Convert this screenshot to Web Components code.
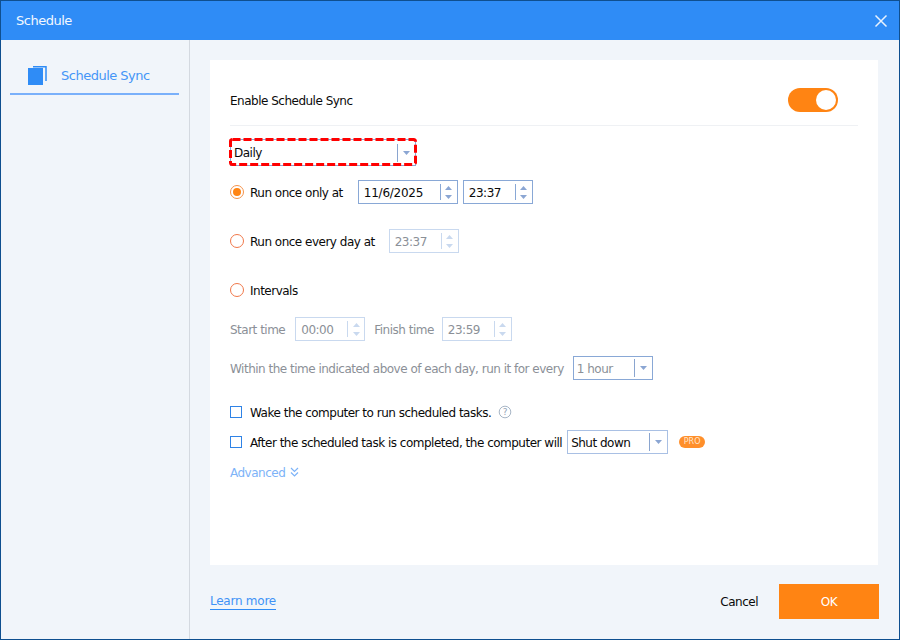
<!DOCTYPE html>
<html lang="en">
<head>
<meta charset="utf-8">
<title>Schedule</title>
<style>
html,body{margin:0;padding:0;background:#f1f5fa}
body{font:12px "DejaVu Sans","Liberation Sans",sans-serif;color:#0a0a0a;letter-spacing:-.5px}
sched-row>span{padding-top:2px}
</style>
</head>
<body>
<sched-window>
  <sched-tab slot="side">Schedule Sync</sched-tab>

  <sched-row h="65" pad="15" between>
    <span>Enable Schedule Sync</span>
    <sched-toggle></sched-toggle>
  </sched-row>
  <sched-hr></sched-hr>
  <sched-row h="27" top="13">
    <sched-select w="186" h="27" focus>Daily</sched-select>
  </sched-row>
  <sched-row h="24" top="14">
    <sched-radio checked>Run once only at</sched-radio>
    <sched-spin w="100" left="15" style="letter-spacing:-.25px">11/6/2025</sched-spin>
    <sched-spin w="70" left="5">23:37</sched-spin>
  </sched-row>
  <sched-row h="24" top="25">
    <sched-radio>Run once every day at</sched-radio>
    <sched-spin w="70" left="14" disabled>23:37</sched-spin>
  </sched-row>
  <sched-row h="24" top="25">
    <sched-radio>Intervals</sched-radio>
  </sched-row>
  <sched-row h="24" top="15" muted>
    <span>Start time</span>
    <sched-spin w="70" left="10" disabled>00:00</sched-spin>
    <span style="margin-left:9px">Finish time</span>
    <sched-spin w="70" left="8" disabled>23:59</sched-spin>
  </sched-row>
  <sched-row h="24" top="15" muted>
    <span>Within the time indicated above of each day, run it for every</span>
    <sched-select w="80" h="24" left="9" muted>1 hour</sched-select>
  </sched-row>
  <sched-row h="24" top="20">
    <sched-check>Wake the computer to run scheduled tasks.</sched-check>
    <sched-help></sched-help>
  </sched-row>
  <sched-row h="24" top="6">
    <sched-check>After the scheduled task is completed, the computer will</sched-check>
    <sched-select w="101" h="24" left="5" soft>Shut down</sched-select>
    <sched-pro></sched-pro>
  </sched-row>
  <sched-row h="24" top="6">
    <sched-advanced>Advanced</sched-advanced>
  </sched-row>

  <sched-link slot="footer-left">Learn more</sched-link>
  <sched-button slot="footer-right">Cancel</sched-button>
  <sched-button slot="footer-right" primary>OK</sched-button>
</sched-window>

<script>
function define(name, css, html, init){
  customElements.define(name, class extends HTMLElement{
    constructor(){
      super();
      this.attachShadow({mode:'open'}).innerHTML = '<style>'+css+'</style>'+html;
    }
    connectedCallback(){ if(init) init(this, this.shadowRoot); }
  });
}

define('sched-window', `
  :host{display:grid;box-sizing:border-box;width:900px;height:640px;border:1px solid #0f4f8f;
    grid-template-columns:189px 1fr;grid-template-rows:39px 1fr;background:#f1f5fa;overflow:hidden}
  header{grid-column:1/3;background:#2f8cf6;color:#f2f8ff;display:flex;align-items:center;justify-content:space-between;
    padding:0 11px 0 15px;font-size:13px}
  header svg{display:block}
  aside{border-right:1px solid #d4d9e0;padding-top:20px;padding-left:9px;box-sizing:border-box}
  main{display:flex;flex-direction:column;padding:20px 20px 0 20px;min-width:0}
  .panel{box-sizing:border-box;background:#fff;width:668px;height:505px;padding:0 20px;flex:none}
  footer{display:flex;align-items:flex-start;justify-content:space-between;padding-top:19px;width:669px}
  .r{display:flex;align-items:center;gap:21px}
`, `
  <header><span>Schedule</span>
    <svg width="14" height="14" viewBox="0 0 14 14"><path d="M1.5 1.5l11 11M12.5 1.5l-11 11" stroke="#e8f2fe" stroke-width="1.5" fill="none"/></svg>
  </header>
  <aside><slot name="side"></slot></aside>
  <main>
    <div class="panel"><slot></slot></div>
    <footer><slot name="footer-left"></slot><div class="r"><slot name="footer-right"></slot></div></footer>
  </main>
`);

define('sched-tab', `
  :host{display:flex;align-items:center;box-sizing:border-box;width:169px;height:35px;border-bottom:2px solid #7ab0fa;
    color:#4595f7;font-size:13px;padding:0 0 2px 18px;gap:14px}
  svg{display:block;flex:none;align-self:flex-start;margin-top:6px}
`, `<svg width="19" height="20" viewBox="0 0 19 20"><rect x="0" y="2" width="15" height="17" fill="#2f8cf6"/><path d="M5 .75h13V15" fill="none" stroke="#2f8cf6" stroke-width="1.5"/></svg><span><slot></slot></span>`);

define('sched-row', `
  :host{display:flex;align-items:center;box-sizing:border-box}
  :host([between]){justify-content:space-between;padding-right:20px}
  :host([muted]){color:#8b9097}
`, `<slot></slot>`, (el)=>{
  el.style.height = el.getAttribute('h')+'px';
  el.style.marginTop = (el.getAttribute('top')||0)+'px';
  if(el.hasAttribute('pad')) el.style.paddingTop = el.getAttribute('pad')+'px';
});

define('sched-hr', `:host{display:block;height:1px;background:#eff1f4}`, ``);

define('sched-toggle', `
  :host{display:block;box-sizing:border-box;width:50px;height:24px;border-radius:12px;background:#ff8413;padding:2px 2px 2px 28px}
  i{display:block;width:20px;height:20px;border-radius:50%;background:#fff}
`, `<i></i>`);

const arrow = (c,d)=>`<svg width="7" height="4" viewBox="0 0 7 4"><path d="${d==='up'?'M3.5 0L7 4H0z':'M0 0h7L3.5 4z'}" fill="${c}"/></svg>`;

define('sched-select', `
  :host{display:flex;align-items:center;box-sizing:border-box;border:1px solid #89a8d6;background:#fff;padding-left:3px;position:relative;flex:none}
  :host([muted]){color:#8b9097}
  :host([soft]){border-color:#a9c0e4}
  .t{flex:1;padding-top:1px}
  .d{width:1px;height:18px;background:#8aa5cf;flex:none}
  .a{width:17px;display:flex;justify-content:center;flex:none}
  svg{display:block}
  svg.f{display:none;position:absolute;left:-2px;top:-2px;pointer-events:none}
  :host([focus]) svg.f{display:block}
`, `<span class="t"><slot></slot></span><span class="d"></span><span class="a">${arrow('#8ba6d3','down')}</span>
  <svg class="f" width="188" height="28" viewBox="0 0 188 28"><rect x="1.5" y="1.5" width="185" height="25" rx="2" fill="none" stroke="#f00" stroke-width="3" stroke-dasharray="8 3"/></svg>`, (el)=>{
  el.style.width = el.getAttribute('w')+'px';
  el.style.height = el.getAttribute('h')+'px';
  if(el.hasAttribute('left')) el.style.marginLeft = el.getAttribute('left')+'px';
});

define('sched-spin', `
  :host{display:flex;align-items:center;box-sizing:border-box;height:24px;border:1px solid #89a8d6;background:#fff;padding-left:5px;flex:none;color:#0a0a0a}
  :host([disabled]){border-color:#c9d9ef;color:#8b9097}
  .t{flex:1;padding-top:1px}
  .d{width:1px;height:16px;background:#89a8d6;flex:none}
  :host([disabled]) .d{background:#c9d9ef}
  .a{width:16px;display:flex;flex-direction:column;align-items:center;gap:5px;flex:none}
  svg{display:block}
  :host([disabled]) svg path{fill:#c9d9ef}
`, `<span class="t"><slot></slot></span><span class="d"></span><span class="a">${arrow('#8ba6d3','up')}${arrow('#8ba6d3','down')}</span>`, (el)=>{
  el.style.width = el.getAttribute('w')+'px';
  el.style.marginLeft = el.getAttribute('left')+'px';
});

define('sched-radio', `
  :host{display:flex;align-items:center;gap:6px}
  i{display:flex;align-items:center;justify-content:center;box-sizing:border-box;width:14px;height:14px;border-radius:50%;border:1px solid #f0784a;background:#fff;flex:none}
  :host([checked]) i{border-color:#f5924a}
  b{display:none;width:8px;height:8px;border-radius:50%;background:#ff8413}
  :host([checked]) b{display:block}
  span{padding-top:2px}
`, `<i><b></b></i><span><slot></slot></span>`);

define('sched-check', `
  :host{display:flex;align-items:center;gap:8px}
  i{display:block;box-sizing:border-box;width:12px;height:12px;border:1px solid #2f83e6;background:#fff;flex:none}
  span{padding-top:2px}
`, `<i></i><span><slot></slot></span>`);

define('sched-help', `:host{display:block;margin-left:7px;height:14px}svg{display:block}text{font:9px "DejaVu Sans",sans-serif}`,
  `<svg width="14" height="14" viewBox="0 0 14 14"><circle cx="7" cy="7" r="5.8" fill="none" stroke="#a8b6c6"/><text x="7" y="10.2" text-anchor="middle" fill="#93a3b6">?</text></svg>`);

define('sched-pro', `
  :host{display:block;box-sizing:border-box;width:26px;height:12px;margin-left:11px;border-radius:6px;background:#ff8f2b;color:#ffe6cc;
    font-size:8px;line-height:12px;text-align:center;letter-spacing:0}
`, `PRO`);

define('sched-advanced', `
  :host{display:flex;align-items:center;gap:5px;color:#7db3f8}
  svg{display:block}
  span{padding-top:2px}
`, `<span><slot></slot></span><svg width="9" height="10" viewBox="0 0 9 10"><path d="M1 1l3.5 3.5L8 1M1 5.5L4.5 9 8 5.5" fill="none" stroke="#7db3f8" stroke-width="1.2"/></svg>`);

define('sched-link', `
  :host{display:block;height:35px;line-height:34px;color:#3f92f6;letter-spacing:-.25px}
  span{border-bottom:1px solid #2f8cf6;padding-bottom:1px}
`, `<span><slot></slot></span>`);

define('sched-button', `
  :host{display:flex;align-items:center;justify-content:center;height:35px;color:#0a0a0a}
  :host([primary]){width:100px;background:#ff8413;color:#fff}
`, `<slot></slot>`);
</script>
</body>
</html>
